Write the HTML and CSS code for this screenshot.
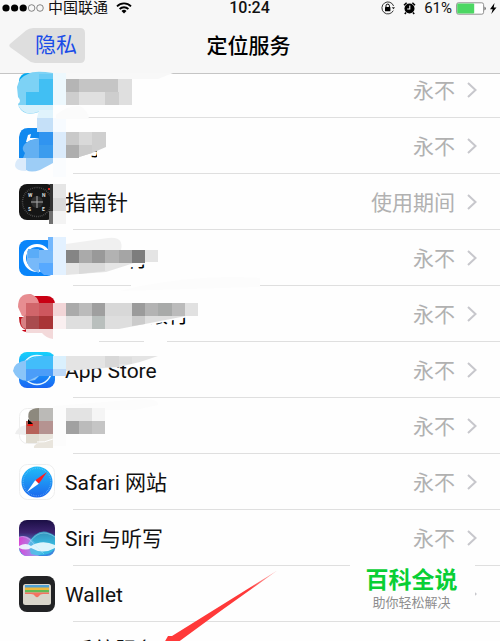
FILE: index.html
```html
<!DOCTYPE html>
<html lang="zh-CN">
<head>
<meta charset="utf-8">
<meta name="viewport" content="width=device-width, initial-scale=1">
<title>定位服务</title>
<link rel="stylesheet" href="styles.css">
</head>
<body>
<div class="screen">
  <header class="header">
    <div class="status">
      <div class="status-left">
        <svg width="42" height="10" viewBox="0 0 42 10" aria-hidden="true">
          <g fill="#000"><circle cx="4" cy="5" r="3.6"/><circle cx="12.6" cy="5" r="3.6"/><circle cx="21.2" cy="5" r="3.6"/></g>
          <g fill="none" stroke="#555" stroke-width=".7"><circle cx="29.6" cy="5" r="3.3"/><circle cx="38" cy="5" r="3.3"/></g>
        </svg>
        <span>中国联通</span>
        <svg class="wifi" width="16" height="12" viewBox="0 0 16 12" aria-hidden="true">
          <g fill="none" stroke="#000" stroke-width="1.8"><path d="M1 4.3A10 10 0 0 1 15 4.3"/><path d="M3.6 7A6.4 6.4 0 0 1 12.4 7"/></g>
          <path d="M5.5 9A3.6 3.6 0 0 1 10.500 9L8 11.600Z"/>
        </svg>
      </div>
      <time class="clock">10:24</time>
      <div class="status-right">
        <svg width="14" height="14" viewBox="0 0 14 14" aria-hidden="true">
          <path d="M12.600 5A6 6 0 1 0 12.300 9.600" fill="none" stroke="#222" stroke-width=".9"/>
          <path d="M10.700 6.200H14L12.500 8.300Z" fill="#222"/>
          <rect x="4" y="6" width="5.400" height="4.200" rx=".5"/>
          <path d="M5 6V4.800a1.700 1.700 0 0 1 3.400 0V6" fill="none" stroke="#000"/>
        </svg>
        <svg class="alarm" width="13" height="14" viewBox="0 0 13 14" aria-hidden="true">
          <circle cx="6.500" cy="7.500" r="5"/>
          <path d="M1 4.200 3.600 1.800M12 4.200 9.400 1.800M3 11.500 1.800 13M10 11.500 11.200 13" stroke="#000" stroke-width="1.500"/>
          <path d="M6.800 4.500V8H4.200" fill="none" stroke="#fff" stroke-width="1.100"/>
        </svg>
        <span>61%</span>
        <svg width="41" height="13" viewBox="0 0 41 13" aria-hidden="true">
          <rect x=".6" y=".8" width="27" height="11.400" rx="1.800" fill="#fff" stroke="#777" stroke-width=".8"/>
          <rect x="1.200" y="1.400" width="17" height="10.200" rx="1" fill="#4cd763"/>
          <path d="M28.600 4.500q2 2 0 4Z" fill="#222"/>
          <path d="M38.500 1 34 7.300h2.700L35.300 12 40.500 5.600h-2.800Z"/>
        </svg>
      </div>
    </div>
    <nav class="nav">
      <button class="back" type="button">
        <svg class="back-shape" viewBox="0 0 76 35" preserveAspectRatio="none" aria-hidden="true"><path d="M1.500 15.500 17 2.500Q20 0 24 0H71Q76 0 76 5V30Q76 35 71 35H26Q22 35 19 32L1.500 19.500Q-1 17.500 1.500 15.500Z" fill="#dedede"/></svg>
        <span>隐私</span>
      </button>
      <h1>定位服务</h1>
    </nav>
  </header>

  <main>
    <ul class="list">
      <li class="row under-header">
        <span class="icon"></span><span class="label"></span>
        <span class="value">永不</span><svg class="chevron" viewBox="0 0 10 16" aria-hidden="true"><path d="M1 1 8.500 8 1 15"/></svg>
        <svg class="smudge" viewBox="0 62 220 56" aria-hidden="true">
          <path d="M53 73H173L158 79H53Z" fill="#f8f8f8"/>
          <path d="M19 81Q20 73 28 73H40V85H19Z" fill="#00a9f1"/>
          <path d="M28 74Q34 70 53 73V105L39 112Q24 117 19 107L18 104Q22 101 18 97L17 87Q19 77 28 74Z" fill="#7dd2f5"/>
          <path d="M26 92H53V105H26ZM39 79H53V92H39Z" fill="#41bff3"/><path d="M39 74H53V79H39Z" fill="#69cbf5"/>
          <path d="M18 105H53V110L40 111Q25 118 18 105Z" fill="#d5f0fb"/>
          <path d="M53 73H66V105H53Z" fill="#edf8fd"/><path d="M39 110H53V118H37Z" fill="#e0f3fc"/>
          <path d="M66 79H79V92H66Z" fill="#b5b5b5"/><path d="M79 79H118V92H79Z" fill="#c5c5c5"/><path d="M118 79H132V105H118Z" fill="#dfdfdf"/>
          <path d="M66 92H79V105H66Z" fill="#cecece"/><path d="M79 92H105V105H79Z" fill="#e0e0e0"/><path d="M105 92H119V105H105Z" fill="#cecece"/>
          <path d="M56 115Q68 105 80 106Q88 110 89 119H56Z" fill="#fbfbfb"/>
        </svg>
      </li>
      <li class="row">
        <span class="icon"></span><span class="label"></span>
        <span class="value">永不</span><svg class="chevron" viewBox="0 0 10 16" aria-hidden="true"><path d="M1 1 8.500 8 1 15"/></svg>
        <svg class="smudge" viewBox="0 118 220 56" aria-hidden="true">
          <path d="M19 158V137Q20 128 28 128H53V158Z" fill="#1189ef"/>
          <path d="M26 142 28 135 31 134 30 138H38V140H31L28 142Z" fill="#fff"/>
          <path d="M37 118H53V132H37Z" fill="#c5e0f8"/>
          <path d="M24 145Q27 140 39 138V158H23L25 153Q21 149 24 145Z" fill="#63b0f2"/>
          <path d="M39 132H53V158H39Z" fill="#3b9cee"/><path d="M39 132H53V145H39Z" fill="#3094f0"/>
          <path d="M26 158H53V163L40 170Q31 173 26 170Z" fill="#9dcdf6"/><path d="M20 158H26V171Q16 171 15 166Q15 160 20 158Z" fill="#dbebfb"/>
          <path d="M53 118H66V132H53Z" fill="#f7fbff"/><path d="M53 132H66V158H53Z" fill="#dbebfb"/><path d="M53 158H66V177H53Z" fill="#fafcfe"/>
          <text x="82" y="155" class="remnant">号</text>
          <path d="M97 140H110V162H97Z" fill="#fefefe"/>
          <path d="M66 132H106V147L92 153 79 157 66 158Z" fill="#cfcfcf"/>
          <path d="M79 132H92V145H79Z" fill="#d9d9d9"/><path d="M66 132H79V145H66Z" fill="#c9c9c9"/><path d="M66 145H79V158H66Z" fill="#aeaeae"/><path d="M79 145H92V153L79 157Z" fill="#cbcbcb"/>
        </svg>
      </li>
      <li class="row">
        <svg class="icon" viewBox="0 0 36 36" aria-hidden="true">
          <rect width="36" height="36" rx="8" fill="#151515"/>
          <circle cx="18" cy="18" r="14.500" fill="none" stroke="#555" stroke-width="1.500" stroke-dasharray=".8 1.100"/>
          <circle cx="18" cy="18" r="6" fill="#2c2c2c"/><path d="M18 12V24M12 18H24" stroke="#aaa"/>
          <g fill="#ddd" class="compass"><text x="9" y="13">W</text><text x="23" y="13">N</text><text x="9" y="27">S</text><text x="23" y="27">E</text></g>
          <path d="M29 4h2v2h-2Z" fill="#d52a20"/>
        </svg>
        <span class="label">指南针</span>
        <span class="value">使用期间</span><svg class="chevron" viewBox="0 0 10 16" aria-hidden="true"><path d="M1 1 8.500 8 1 15"/></svg>
        <svg class="smudge" viewBox="0 174 220 56" aria-hidden="true">
          <path d="M49 211H53V224H49Z" fill="#707070"/><path d="M53 184H66V198H53Z" fill="#e5e5e5"/><path d="M53 198H66V211H53Z" fill="#dadada"/><path d="M53 211H66V224H53Z" fill="#f3f3f3"/>
          <path d="M50 184H53V211H50Z" fill="#333"/>
        </svg>
      </li>
      <li class="row">
        <svg class="icon" viewBox="0 0 36 36" aria-hidden="true"><rect width="36" height="36" rx="8" fill="#0985fa"/><circle cx="18" cy="18" r="12.500" fill="none" stroke="#fff" stroke-width="3"/></svg>
        <span class="label"></span>
        <span class="value">永不</span><svg class="chevron" viewBox="0 0 10 16" aria-hidden="true"><path d="M1 1 8.500 8 1 15"/></svg>
        <svg class="smudge" viewBox="0 230 220 56" aria-hidden="true">
          <text x="127" y="266" class="remnant">行</text>
          <path d="M124 244H150V263L124 269Z" fill="#fefefe"/>
          <path d="M27 251Q31 247 39 250H53V263H39V273Q29 270 27 262Z" fill="#77b9f9"/><path d="M28 249H39V258H28Z" fill="#5aacf8"/>
          <path d="M39 263H53V275H44Q40 272 39 269Z" fill="#57a9ff"/><path d="M48 237H53V251H48Z" fill="#72b7fd"/>
          <path d="M53 237H66V275H53Z" fill="#e3f1ff"/><path d="M66 244 108 238Q124 236 121 250H66Z" fill="#f0f0f0"/>
          <path d="M66 263H134L106 272 66 275Z" fill="#e5e5e5"/><path d="M79 263H105V271L79 274Z" fill="#dadada"/>
          <path d="M66 250H79V263H66Z" fill="#858585"/><path d="M79 250H92V263H79Z" fill="#aaa"/><path d="M92 250H105V263H92Z" fill="#999"/><path d="M105 250H119V263H105Z" fill="#b2b2b2"/><path d="M119 250H132V263H119Z" fill="#a5a5a5"/><path d="M132 250H145V263H132Z" fill="#7d7d7d"/><path d="M145 250H158V262H145Z" fill="#e4e4e4"/>
        </svg>
      </li>
      <li class="row">
        <svg class="icon" viewBox="0 0 36 36" aria-hidden="true"><rect width="36" height="36" rx="8" fill="#c90013"/></svg>
        <span class="label"></span>
        <span class="value">永不</span><svg class="chevron" viewBox="0 0 10 16" aria-hidden="true"><path d="M1 1 8.500 8 1 15"/></svg>
        <svg class="smudge" viewBox="0 286 220 56" aria-hidden="true">
          <path d="M131 285H180V288H131Z" fill="#fefefe"/><path d="M140 286Q205 274 260 278V287L120 291Z" fill="#fcfcfc"/>
          <text x="147" y="322" class="remnant">银行</text><path d="M120 300H198V315L140 327H120Z" fill="#fefefe"/>
          <path d="M18 296H28V330H18Z" fill="#fefefe"/><path d="M19 317H26V330Q19 328 19 317Z" fill="#bf1721"/>
          <path d="M18 307Q18 293 31 294Q38 297 39 303V316H22Z" fill="#e78d91"/><path d="M21 319 26 314V329Q20 328 21 319Z" fill="#d78083"/>
          <path d="M26 303H39V316H26Z" fill="#d1656a"/><path d="M39 303H53V316H39Z" fill="#ce575e"/><path d="M26 316H39V329H26Z" fill="#a94b4e"/><path d="M39 316H53V329H39Z" fill="#a93436"/>
          <path d="M26 329H53V339Q46 338 42 333H26Z" fill="#f3d9da"/><path d="M53 303H66V316H53Z" fill="#f2d5d7"/><path d="M53 316H66V329H53Z" fill="#faeff0"/>
          <path d="M66 303H79V316H66Z" fill="#aaa"/><path d="M79 303H92V316H79Z" fill="#bbb"/><path d="M92 303H105V316H92Z" fill="#9f9f9f"/><path d="M105 303H132V316H105Z" fill="#d8d8d8"/><path d="M132 303H145V316H132Z" fill="#9b9b9b"/><path d="M145 303H158V316H145Z" fill="#b3b3b3"/><path d="M158 303H172V316H158Z" fill="#a8aaa9"/><path d="M172 303H185V316H172Z" fill="#bbb"/><path d="M185 303H198V316H185Z" fill="#e1e1e1"/>
          <path d="M66 316H186L145 324 119 329H66Z" fill="#dedede"/><path d="M92 316H105V329H92Z" fill="#b9bfbd"/><path d="M132 316H145V324L132 326Z" fill="#cbcbcb"/>
        </svg>
      </li>
      <li class="row">
        <svg class="icon" viewBox="0 0 36 36" aria-hidden="true">
          <defs><linearGradient id="store" x2="0" y2="1"><stop stop-color="#16d1fb"/><stop offset="1" stop-color="#1965f3"/></linearGradient></defs>
          <rect width="36" height="36" rx="8" fill="url(#store)"/><circle cx="18" cy="18" r="14.500" fill="none" stroke="#e5f7ff" stroke-width="1.500"/>
        </svg>
        <span class="label">App Store</span>
        <span class="value">永不</span><svg class="chevron" viewBox="0 0 10 16" aria-hidden="true"><path d="M1 1 8.500 8 1 15"/></svg>
        <svg class="smudge" viewBox="0 342 220 56" aria-hidden="true">
          <path d="M72 340H99V344H72ZM144 340H167V344H144Z" fill="#fefefe"/>
          <path d="M13 371Q14 362 27 360L39 356H53V376H39L35 380Q18 384 13 371Z" fill="#8ac5f8"/><path d="M39 356H53V369H26V361Z" fill="#42bdfa"/><path d="M26 369H53V376H38L26 382Z" fill="#4b9df8"/>
          <path d="M53 356H66V369H53Z" fill="#daf0fd"/><path d="M53 369H66V376H53Z" fill="#bed9f8"/>
          <path d="M66 356H158L140 362 119 367 66 371Z" fill="#e4e4e4"/><path d="M105 356H119V367H105Z" fill="#d8d8d8"/><path d="M119 357H132V364H119Z" fill="#dedede"/>
        </svg>
      </li>
      <li class="row">
        <svg class="icon" viewBox="0 0 36 36" aria-hidden="true"><rect x=".5" y=".5" width="35" height="35" rx="8" fill="#fff" stroke="#eee"/></svg>
        <span class="label"></span>
        <span class="value">永不</span><svg class="chevron" viewBox="0 0 10 16" aria-hidden="true"><path d="M1 1 8.500 8 1 15"/></svg>
        <svg class="smudge" viewBox="0 398 220 56" aria-hidden="true">
          <path d="M53 406 143 399Q159 399 158 405L135 410H66V446H53Z" fill="#fcfcfc"/>
          <path d="M15 434Q17 427 26 425V435Z" fill="#eee"/><path d="M29 412Q32 408 39 408V421H30Q27 417 29 412Z" fill="#8d897e"/><path d="M39 408H53V421H39Z" fill="#bbbab7"/>
          <path d="M26 421H39V434H26Z" fill="#b66259"/><path d="M28 419 33 424 28 425Z"/><path d="M28 424H33V426H27Z" fill="#f31912"/><path d="M39 421H53V434H39Z" fill="#b59391"/>
          <path d="M26 434H39V443H26Z" fill="#e0dcd1"/><path d="M39 434H53V448H34Q33 445 39 443Z" fill="#e9e5dd"/><path d="M37 442Q44 443 53 439" fill="none" stroke="#fff"/>
          <path d="M66 408H92V421H66Z" fill="#e3e3e3"/><path d="M92 408H105V421H92Z" fill="#f5f5f5"/><path d="M66 421H79V434H66Z" fill="#a1a1a1"/><path d="M79 421H92V434H79Z" fill="#bbb"/><path d="M92 421H105V434H92Z" fill="#c5c5c5"/>
        </svg>
      </li>
      <li class="row">
        <svg class="icon" viewBox="0 0 36 36" aria-hidden="true">
          <defs><linearGradient id="safari" x2="0" y2="1"><stop stop-color="#20bdf8"/><stop offset="1" stop-color="#1c67ee"/></linearGradient></defs>
          <rect x=".5" y=".5" width="35" height="35" rx="8" fill="#fff" stroke="#eee"/><circle cx="18" cy="18" r="15.500" fill="url(#safari)"/>
          <circle cx="18" cy="18" r="13.800" fill="none" stroke="#9bd7ff" stroke-width="1.200" stroke-opacity=".7" stroke-dasharray=".5 1.300"/>
          <path d="M28 8 19.800 19.800 16.200 16.200Z" fill="#ff1d20"/><path d="M8 28 16.200 16.200 19.800 19.800Z" fill="#fff"/>
        </svg>
        <span class="label">Safari 网站</span>
        <span class="value">永不</span><svg class="chevron" viewBox="0 0 10 16" aria-hidden="true"><path d="M1 1 8.500 8 1 15"/></svg>
      </li>
      <li class="row">
        <svg class="icon" viewBox="0 0 36 36" aria-hidden="true">
          <defs>
            <linearGradient id="siri" x2="0" y2="1"><stop stop-color="#1b0f45"/><stop offset=".35" stop-color="#3d2470"/><stop offset=".65" stop-color="#4a7fc8"/><stop offset="1" stop-color="#3a86e4"/></linearGradient>
            <linearGradient id="pink"><stop stop-color="#f03fd8"/><stop offset=".7" stop-color="#a9a0f0"/><stop offset="1" stop-color="#769be8"/></linearGradient>
            <clipPath id="tile"><rect width="36" height="36" rx="8"/></clipPath>
          </defs>
          <g clip-path="url(#tile)"><path d="M0 0H36V36H0Z" fill="url(#siri)"/>
            <path d="M0 17Q6 14 12 19T25 32L19 36H6Q2 34 0 28Z" fill="url(#pink)" opacity=".85"/>
            <path d="M9 24Q20 4 36 16V29Q28 38 12 34Z" fill="#2fd3e6" opacity=".65"/>
            <path d="M0 26Q7 22 12 26Q23 19 36 25V28Q24 35 12 28Q7 31 0 28Z" fill="#effcff" opacity=".9"/>
            <path d="M0 17Q7 15 13 22T25 34M9 25Q20 6 36 17" fill="none" stroke="#b9e9ff" stroke-width=".6" opacity=".7"/></g>
        </svg>
        <span class="label">Siri 与听写</span>
        <span class="value">永不</span><svg class="chevron" viewBox="0 0 10 16" aria-hidden="true"><path d="M1 1 8.500 8 1 15"/></svg>
      </li>
      <li class="row">
        <svg class="icon" viewBox="0 0 36 36" aria-hidden="true">
          <rect width="36" height="36" rx="8" fill="#222325"/><rect x="4" y="8" width="28" height="21" rx="2.500" fill="#d9d6cb"/>
          <path d="M6 9H30V12H6Z" fill="#4fa2d5"/><path d="M6 11.500H30V14H6Z" fill="#eeb83b"/><path d="M6 14H30V16.500H6Z" fill="#63ba56"/><path d="M6 16.500H30V18H24Q21 18 20 20Q18 22.500 16 20Q15 18 12 18H6Z" fill="#f47361"/>
        </svg>
        <span class="label">Wallet</span>
        <svg class="chevron" viewBox="0 0 10 16" aria-hidden="true"><path d="M1 1 8.500 8 1 15"/></svg>
        <div class="watermark"><strong>百科全说</strong><span>助你轻松解决</span></div>
      </li>
      <li class="row system">
        <span class="label">系统服务</span>
        <svg class="pointer" viewBox="0 0 120 72" aria-hidden="true">
          <defs><linearGradient id="arrow"><stop offset=".75" stop-color="#ff3939"/><stop offset="1" stop-color="#ff3939" stop-opacity=".25"/></linearGradient></defs>
          <path d="M118 -1 12 65 8 65 4 72H17L62 39Z" fill="url(#arrow)"/>
        </svg>
      </li>
    </ul>
  </main>
</div>
</body>
</html>
```
FILE: styles.css
```css
* { box-sizing: border-box; }

body {
  margin: 0;
  background: #fefefe;
  color: #111;
  font-family: Roboto, "Noto Sans CJK SC", sans-serif;
  font-size: 21px;
}

.screen {
  height: 100vh;
  overflow: hidden;
}

svg { display: block; flex: none; }

.header {
  position: relative;
  z-index: 1;
  background: #f7f7f7;
  border-bottom: 1px solid #c5c5c5;
}

.status {
  display: grid;
  grid-template-columns: 1fr auto 1fr;
  align-items: center;
  height: 16px;
  padding: 0 3px 0 2px;
  font-size: 15px;
  line-height: 16px;
}

.status-left,
.status-right {
  display: flex;
  align-items: center;
  gap: 4px;
}

.status-right { justify-content: flex-end; }
.wifi { margin-left: 4px; }
.alarm { margin: 0 4px; }
.clock { font-size: 16px; font-weight: 500; }

.nav {
  display: grid;
  grid-template-columns: 1fr auto 1fr;
  align-items: center;
  height: 57px;
  padding: 2px 12px 0 9px;
}

.back {
  position: relative;
  justify-self: start;
  width: 76px;
  height: 35px;
  padding: 0 0 0 18px;
  border: 0;
  background: none;
  color: #194ce8;
  font: inherit;
  line-height: 35px;
}

.back-shape {
  position: absolute;
  inset: 0;
  width: 100%;
  height: 100%;
}

.back span { position: relative; }

h1 {
  margin: 0;
  color: #000;
  font-size: 21px;
  font-weight: 500;
  line-height: 32px;
}

.list {
  margin: -12px 0 0;
  padding: 0;
  list-style: none;
}

.row {
  position: relative;
  display: flex;
  align-items: center;
  height: 56px;
  padding: 0 23px 0 19px;
}

.row::after {
  content: "";
  position: absolute;
  right: 0;
  bottom: 0;
  left: 73px;
  height: 1px;
  background: #dfdfdf;
}

.under-header { z-index: 2; }

.icon {
  flex: none;
  width: 36px;
  height: 36px;
}

.label {
  flex: 1;
  margin-left: 10px;
  padding-top: 2px;
  line-height: 32px;
}

.value {
  padding-top: 2px;
  color: #b1b1b1;
  line-height: 32px;
}

.chevron {
  width: 10px;
  height: 16px;
  margin-left: 12px;
  fill: none;
  stroke: #c7c7cc;
  stroke-width: 2;
}

.smudge {
  position: absolute;
  top: 0;
  left: 0;
  z-index: 1;
  width: 220px;
  height: 56px;
  overflow: visible;
}

.remnant { font-size: 21px; }

.compass { font-size: 5px; font-weight: 700; }

.watermark {
  position: absolute;
  top: -4px;
  right: 25px;
  z-index: 1;
  display: flex;
  flex-direction: column;
  align-items: center;
  width: 125px;
  padding: 6px 2px 4px 0;
  background: #fefefe;
  color: #8e8e8e;
  font-size: 13px;
  line-height: 18px;
}

.watermark strong {
  color: #08cf35;
  font-size: 23px;
  line-height: 26px;
}

.system .label {
  margin-left: 54px;
  padding-top: 0;
}

.pointer {
  position: absolute;
  top: -51px;
  left: 160px;
  width: 120px;
  height: 72px;
}
```
